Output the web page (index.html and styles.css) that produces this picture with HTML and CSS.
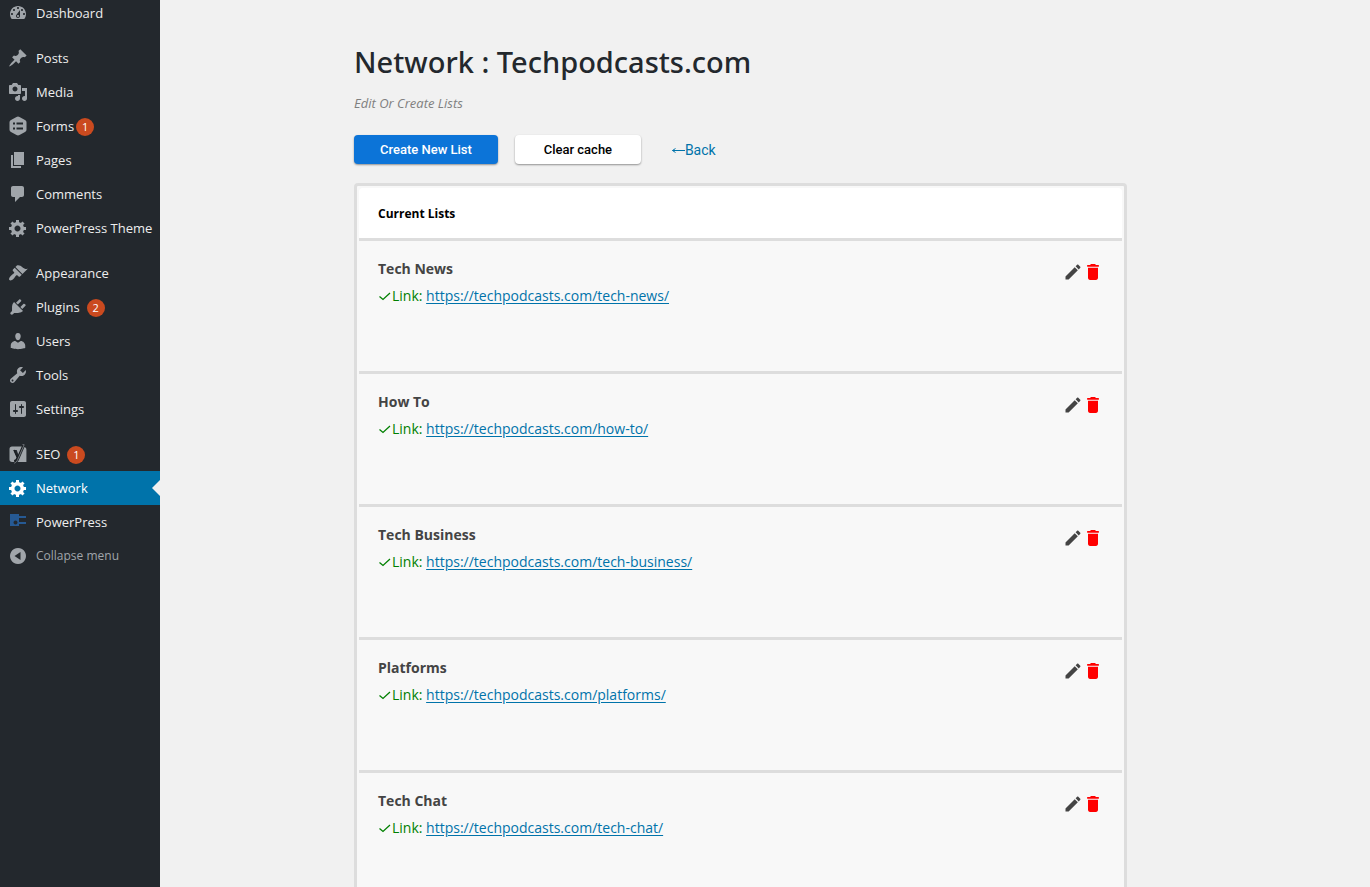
FILE: index.html
```html
<!DOCTYPE html>
<html lang="en">
<head>
<meta charset="utf-8">
<title>Network : Techpodcasts.com</title>
<link rel="stylesheet" href="styles.css">
</head>
<body>
<svg class="sprite" aria-hidden="true">
  <symbol id="gear" viewBox="0 0 20 20"><path d="M18 12h-2.18c-.17.7-.44 1.35-.81 1.93l1.54 1.54-2.1 2.1-1.54-1.54c-.58.36-1.23.63-1.91.79V19H8v-2.18c-.68-.16-1.33-.43-1.91-.79l-1.54 1.54-2.12-2.12 1.54-1.54c-.36-.58-.63-1.23-.79-1.91H1V9.03h2.17c.16-.7.44-1.35.8-1.94L2.43 5.55l2.1-2.1 1.54 1.54c.58-.37 1.24-.64 1.93-.81V2h3v2.18c.68.16 1.33.43 1.91.79l1.54-1.54 2.12 2.12-1.54 1.54c.36.59.64 1.24.8 1.94H18V12zm-8.5 1.5c1.66 0 3-1.34 3-3s-1.34-3-3-3-3 1.34-3 3 1.34 3 3 3z"/></symbol>
  <symbol id="edit" viewBox="0 0 24 24"><path d="M3 17.25V21h3.75L17.81 9.94l-3.75-3.75L3 17.25zM20.71 7.04c.39-.39.39-1.02 0-1.41l-2.34-2.34c-.39-.39-1.02-.39-1.41 0l-1.83 1.83 3.75 3.75 1.83-1.83z"/></symbol>
  <symbol id="trash" viewBox="0 0 24 24"><path d="M6 19c0 1.500.9 2.500 2.500 2.500h7c1.600 0 2.500-1 2.500-2.500V7H6v12zM19 3.700h-3.500l-1-1.200h-5l-1 1.200H5v2h14v-2z"/></symbol>
  <symbol id="check" viewBox="0 0 14 14"><path d="M1.500 7.500l3.500 3 7-6.500" fill="none" stroke="currentColor" stroke-width="1.300"/></symbol>
</svg>
<div class="layout">
  <nav class="sidebar" aria-label="Main menu">
    <ul class="menu">
      <li><a href="#"><svg class="icon" viewBox="0 0 20 20"><path d="M3.76 16h12.480c1.100-1.370 1.760-3.110 1.760-5 0-4.420-3.580-8-8-8s-8 3.580-8 8c0 1.890.66 3.630 1.760 5zM10 4c.55 0 1 .45 1 1s-.45 1-1 1-1-.45-1-1 .45-1 1-1zM6 6c.55 0 1 .45 1 1s-.45 1-1 1-1-.45-1-1 .45-1 1-1zm8 0c.55 0 1 .45 1 1s-.45 1-1 1-1-.45-1-1 .45-1 1-1zm-5.370 5.550L12 7v6c0 1.100-.9 2-2 2s-2-.9-2-2c0-.57.24-1.080.63-1.450zM4 10c.55 0 1 .45 1 1s-.45 1-1 1-1-.45-1-1 .45-1 1-1zm12 0c.55 0 1 .45 1 1s-.45 1-1 1-1-.45-1-1 .45-1 1-1zm-5 3c0-.55-.45-1-1-1s-1 .45-1 1 .45 1 1 1 1-.45 1-1z"/></svg>Dashboard</a></li>
      <li class="group"><a href="#"><svg class="icon" viewBox="0 0 20 20"><path d="M10.44 3.02l1.82-1.82 6.36 6.35-1.83 1.82c-1.05-.68-2.48-.57-3.41.36l-.75.75c-.92.93-1.04 2.35-.35 3.41l-1.83 1.82-2.41-2.41-2.8 2.79c-.42.42-3.38 2.71-3.8 2.29s1.86-3.39 2.28-3.81l2.79-2.79L4.1 9.36l1.83-1.82c1.05.69 2.48.57 3.4-.36l.75-.75c.93-.92 1.05-2.35.36-3.41z"/></svg>Posts</a></li>
      <li><a href="#"><svg class="icon" viewBox="0 0 20 20"><path d="M13 11V4c0-.55-.45-1-1-1h-1.670L9 1H5L3.670 3H2c-.55 0-1 .45-1 1v7c0 .55.45 1 1 1h10c.55 0 1-.45 1-1zM7 4.500c1.380 0 2.500 1.120 2.500 2.500S8.380 9.500 7 9.500 4.500 8.380 4.500 7 5.620 4.500 7 4.500zM14 6h5v10.500c0 1.380-1.120 2.500-2.500 2.500S14 17.880 14 16.500s1.120-2.500 2.500-2.500c.17 0 .34.02.5.05V9h-3V6zm-4 8.050V13h2v3.500c0 1.380-1.120 2.500-2.500 2.500S7 17.880 7 16.500 8.120 14 9.500 14c.17 0 .34.02.5.05z"/></svg>Media</a></li>
      <li><a href="#"><svg class="icon" viewBox="0 0 20 20"><path fill-rule="evenodd" d="M10 .5c.6 0 1 .2 1.500.5l5.500 3.100c1 .6 1.500 1.300 1.500 2.400v7c0 1.100-.5 1.800-1.500 2.400L11.500 19c-1 .6-2 .6-3 0L3 15.900c-1-.6-1.500-1.300-1.500-2.400v-7c0-1.100.5-1.800 1.500-2.400L8.500 1c.5-.3.900-.5 1.500-.5zM5 6.500v2h2v-2zm3.500 0v2H15v-2zM5 11.500v2h2v-2zm3.500 0v2H15v-2z"/></svg>Forms<span class="badge">1</span></a></li>
      <li><a href="#"><svg class="icon" viewBox="0 0 20 20"><path d="M6 15V2h10v13H6zm-1 1h8v2H3V5h2v11z"/></svg>Pages</a></li>
      <li><a href="#"><svg class="icon" viewBox="0 0 20 20"><path d="M5 2h9c1.100 0 2 .9 2 2v7c0 1.100-.9 2-2 2h-2l-5 5v-5H5c-1.100 0-2-.9-2-2V4c0-1.100.9-2 2-2z"/></svg>Comments</a></li>
      <li><a href="#"><svg class="icon"><use href="#gear"/></svg>PowerPress Theme</a></li>
      <li class="group"><a href="#"><svg class="icon" viewBox="0 0 20 20"><path d="M14.48 11.06L7.41 3.99l1.5-1.5c.5-.56 2.3-.47 3.51.32 1.21.8 1.43 1.28 2.91 2.1 1.18.64 2.45 1.26 4.45.85zm-.71.71L6.7 4.7 4.93 6.47c-.39.39-.39 1.02 0 1.41l1.06 1.06c.39.39.39 1.03 0 1.42-.6.6-1.43 1.11-2.21 1.69-.35.26-.7.53-1.01.84C1.43 14.23.4 16.08 1.4 17.07c.99 1 2.84-.03 4.18-1.36.31-.31.58-.66.85-1.02.57-.78 1.08-1.61 1.69-2.21.39-.39 1.02-.39 1.41 0l1.06 1.06c.39.39 1.02.39 1.41 0z"/></svg>Appearance</a></li>
      <li><a href="#"><svg class="icon" viewBox="0 0 20 20"><path d="M13.11 4.36L9.87 7.6 8 5.73l3.24-3.24c.35-.34 1.05-.2 1.56.32.52.51.66 1.21.31 1.55zm-8 1.77l.91-1.12 9.01 9.01-1.19.84c-.71.71-2.63 1.16-3.82 1.16H6.14L4.9 17.26c-.59.59-1.54.59-2.12 0-.59-.58-.59-1.53 0-2.12l1.24-1.24v-3.88c0-1.13.4-3.19 1.09-3.89zm7.26 3.97l3.24-3.24c.34-.35 1.04-.21 1.55.31.52.51.66 1.21.31 1.55l-3.24 3.25z"/></svg>Plugins <span class="badge badge-spaced">2</span></a></li>
      <li><a href="#"><svg class="icon" viewBox="0 0 20 20"><path d="M10 9.25c-2.27 0-2.73-3.44-2.73-3.44C7 4.02 7.82 2 9.97 2c2.16 0 2.98 2.02 2.71 3.81 0 0-.41 3.44-2.68 3.44zm0 2.57L12.72 10c2.39 0 4.52 2.33 4.52 4.53v2.49s-3.65 1.13-7.24 1.13c-3.65 0-7.24-1.13-7.24-1.13v-2.49c0-2.25 1.94-4.48 4.47-4.48z"/></svg>Users</a></li>
      <li><a href="#"><svg class="icon" viewBox="0 0 20 20"><path d="M16.68 9.77c-1.34 1.34-3.3 1.67-4.95.99l-5.41 6.52c-.99.99-2.59.99-3.58 0s-.99-2.59 0-3.57l6.52-5.42c-.68-1.65-.35-3.61.99-4.95 1.28-1.28 3.12-1.62 4.72-1.06l-2.89 2.89 2.82 2.82 2.86-2.87c.53 1.58.18 3.39-1.08 4.65zM3.81 16.21c.4.39 1.04.39 1.43 0 .4-.4.4-1.04 0-1.43-.39-.4-1.03-.4-1.43 0-.39.39-.39 1.03 0 1.43z"/></svg>Tools</a></li>
      <li><a href="#"><svg class="icon" viewBox="0 0 20 20"><path d="M18 16V4c0-1.100-.9-2-2-2H4c-1.100 0-2 .9-2 2v12c0 1.100.9 2 2 2h12c1.100 0 2-.9 2-2zM8 11h1c.55 0 1 .45 1 1s-.45 1-1 1H8v1.500c0 .28-.22.5-.5.5s-.5-.22-.5-.5V13H6c-.55 0-1-.45-1-1s.45-1 1-1h1V5.500c0-.28.22-.5.5-.5s.5.22.5.5V11zm5-2h-1c-.55 0-1-.45-1-1s.45-1 1-1h1V5.500c0-.28.22-.5.5-.5s.5.22.5.5V7h1c.55 0 1 .45 1 1s-.45 1-1 1h-1v5.500c0 .28-.22.5-.5.5s-.5-.22-.5-.5V9z"/></svg>Settings</a></li>
      <li class="group"><a href="#"><svg class="icon" viewBox="0 0 20 20"><path d="M4 2.500h11L10.800 12 8.700 6H5.500l3.700 8c-.5 1.400-1.300 2-2.900 2.100v1.900H4c-1.600 0-2.500-1-2.500-2.500v-10.500C1.500 3.500 2.400 2.500 4 2.500zM16.500 3c1.300.4 1.900 1.300 1.900 2.700V18H9.500c.8-.8 1.300-1.800 1.800-3z"/><path d="M6 6l3.300 7.500c-.5 1.800-1.300 3-3.100 3.200M9.600 13.500L15.200 1" fill="none" stroke="#1b1f23" stroke-width="1.500"/><path d="M14.400.7h1.800L9.800 15.300c-.9 2.100-1.900 3.500-3.700 3.900" fill="none" stroke="#a0a5aa" stroke-width=".6"/></svg>SEO <span class="badge badge-spaced">1</span></a></li>
      <li><a class="current" href="#" aria-current="page"><svg class="icon"><use href="#gear"/></svg>Network</a></li>
      <li><a href="#"><svg class="icon" viewBox="0 0 20 20"><path fill="#265a94" fill-rule="evenodd" d="M2 2h9v2h7v2h-7v4h7v2h-7v2H2zM7.500 8.500a2 2 0 1 0 .01 0z"/></svg>PowerPress</a></li>
      <li><button class="collapse" type="button"><svg class="icon" viewBox="0 0 20 20"><path fill-rule="evenodd" d="M10 2a8 8 0 1 0 .01 0zM12.500 6v8L6.500 10z"/></svg>Collapse menu</button></li>
    </ul>
  </nav>
  <main class="content">
    <h1>Network : Techpodcasts.com</h1>
    <p class="subtitle">Edit Or Create Lists</p>
    <div class="actions">
      <button class="btn btn-primary" type="button">Create New List</button>
      <button class="btn" type="button">Clear cache</button>
      <a class="back" href="#"><svg class="arrow" viewBox="0 0 14 14"><path d="M14 7.500H1.500M4.500 5.500l-3 2 3 2" fill="none" stroke="currentColor"/></svg>Back</a>
    </div>
    <section class="panel">
      <h2>Current Lists</h2>
      <ul class="lists">
        <li><div><h3>Tech News</h3><p><svg class="check"><use href="#check"/></svg>Link: <a href="#">https://techpodcasts.com/tech-news/</a></p></div><div class="tools"><button type="button" aria-label="Edit Tech News"><svg><use href="#edit"/></svg></button><button class="delete" type="button" aria-label="Delete Tech News"><svg><use href="#trash"/></svg></button></div></li>
        <li><div><h3>How To</h3><p><svg class="check"><use href="#check"/></svg>Link: <a href="#">https://techpodcasts.com/how-to/</a></p></div><div class="tools"><button type="button" aria-label="Edit How To"><svg><use href="#edit"/></svg></button><button class="delete" type="button" aria-label="Delete How To"><svg><use href="#trash"/></svg></button></div></li>
        <li><div><h3>Tech Business</h3><p><svg class="check"><use href="#check"/></svg>Link: <a href="#">https://techpodcasts.com/tech-business/</a></p></div><div class="tools"><button type="button" aria-label="Edit Tech Business"><svg><use href="#edit"/></svg></button><button class="delete" type="button" aria-label="Delete Tech Business"><svg><use href="#trash"/></svg></button></div></li>
        <li><div><h3>Platforms</h3><p><svg class="check"><use href="#check"/></svg>Link: <a href="#">https://techpodcasts.com/platforms/</a></p></div><div class="tools"><button type="button" aria-label="Edit Platforms"><svg><use href="#edit"/></svg></button><button class="delete" type="button" aria-label="Delete Platforms"><svg><use href="#trash"/></svg></button></div></li>
        <li><div><h3>Tech Chat</h3><p><svg class="check"><use href="#check"/></svg>Link: <a href="#">https://techpodcasts.com/tech-chat/</a></p></div><div class="tools"><button type="button" aria-label="Edit Tech Chat"><svg><use href="#edit"/></svg></button><button class="delete" type="button" aria-label="Delete Tech Chat"><svg><use href="#trash"/></svg></button></div></li>
      </ul>
    </section>
  </main>
</div>
</body>
</html>
```
FILE: styles.css
```css
* { box-sizing: border-box; }
html, body { height: 100%; }
body {
  margin: 0;
  overflow: hidden;
  background: #f1f1f1;
  color: #444;
  font: 13px/20px "Open Sans", "Noto Sans", sans-serif;
}
h1, h2, h3, p, ul { margin: 0; padding: 0; }
ul { list-style: none; }
button { margin: 0; padding: 0; border: 0; background: none; font: inherit; cursor: pointer; }
svg { display: block; fill: currentColor; }
.sprite { position: absolute; width: 0; height: 0; }

.layout { display: flex; min-height: 100%; }
.sidebar { flex: 0 0 160px; background: #23282d; }
/* The menu is slightly scrolled past its top edge. */
.menu { margin-top: -4px; }
.menu .group { margin-top: 11px; }
.menu a, .collapse {
  display: flex;
  align-items: center;
  width: 100%;
  height: 34px;
  padding-left: 8px;
  color: #eee;
  text-decoration: none;
  white-space: nowrap;
}
.icon { flex: none; width: 20px; height: 20px; margin-right: 8px; color: #a0a5aa; }
.badge {
  width: 18px;
  height: 18px;
  margin: 1px 0 0 2px;
  border-radius: 50%;
  background: #ca4a1f;
  color: #fff;
  font-size: 11px;
  line-height: 18px;
  text-align: center;
}
.badge-spaced { margin-left: 7px; }
.menu .current { position: relative; background: #0073aa; color: #fff; }
.current .icon { color: #fff; }
.current::after {
  content: "";
  position: absolute;
  top: 9px;
  right: 0;
  border: 8px solid transparent;
  border-left: 0;
  border-right-color: #f1f1f1;
}
.menu .collapse { color: #a0a5aa; font-size: 12px; }

.content { flex: 1; min-width: 0; padding: 42px 243px 0 194px; }
h1 { color: #23282d; font-family: "Noto Sans", sans-serif; font-size: 29px; font-weight: 500; line-height: 40px; }
.subtitle { margin-top: 11px; color: #808080; font-style: italic; }
.actions {
  display: flex;
  align-items: center;
  gap: 17px;
  margin: 22px 0 19px;
  font-family: Roboto, sans-serif;
  font-size: 14px;
}
.btn {
  min-width: 126px;
  height: 29px;
  padding: 0 26px;
  border-radius: 4px;
  background: #fff;
  box-shadow: 0 1px 2px rgba(0, 0, 0, .4);
  color: #000;
  font-size: 13px;
  font-weight: 500;
}
.btn-primary { background: #0c74d8; color: #fff; }
.back { display: flex; align-items: center; margin-left: 13px; color: #0073aa; text-decoration: none; }
.arrow { width: 14px; height: 14px; }

.panel { padding: 2px; border: 3px solid #ddd; border-radius: 4px; background: #f8f8f8; }
h2 {
  padding: 16px 19px 14px;
  border-radius: 4px 4px 0 0;
  background: #fff;
  color: #000;
  font-size: 12px;
  font-weight: 700;
}
.lists li {
  display: flex;
  justify-content: space-between;
  min-height: 133px;
  padding: 18px 19px 0;
  border-top: 3px solid #ddd;
}
h3 { font-size: 14px; font-weight: 700; }
.lists p { display: flex; align-items: center; margin-top: 7px; color: #008000; font-size: 14px; white-space: pre; }
.lists a { color: #0073aa; text-underline-offset: 2px; }
.check { width: 14px; height: 14px; }
.tools { display: flex; align-items: flex-start; padding-top: 3px; }
.tools button { color: #444; }
.tools .delete { color: #f00; }
.tools svg { width: 20px; height: 20px; }
```
